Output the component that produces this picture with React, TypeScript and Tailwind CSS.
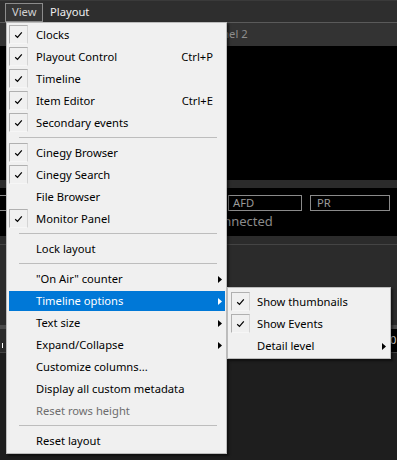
import React from "react";

type ItemProps = {
  label: string;
  checked?: boolean;
  shortcut?: string;
  arrow?: boolean;
  highlighted?: boolean;
  disabled?: boolean;
  sub?: boolean;
};

function Check() {
  return (
    <svg width="9" height="8" viewBox="0 0 9 8" className="block">
      <path d="M1.2 4.2 L3.5 6.4 L7.8 1.4" fill="none" stroke="#000" strokeWidth="1.2" />
    </svg>
  );
}

function Arrow({ white }: { white?: boolean }) {
  return (
    <svg width="4" height="7" viewBox="0 0 4 7" className="block">
      <polygon points="0,0 4,3.5 0,7" fill={white ? "#ffffff" : "#000000"} />
    </svg>
  );
}

function Item({ label, checked, shortcut, arrow, highlighted, disabled, sub }: ItemProps) {
  const color = highlighted ? "bg-[#0078d7] text-white" : disabled ? "text-[#6d6d6d]" : "text-black";
  return (
    <div className={`h-[22px] py-px ${sub ? "ml-[3px] mr-px" : "ml-[2px] mr-px"}`}>
      <div className={`h-full flex items-center ${color}`}>
        <div
          className={`self-start w-[19px] h-[19px] flex items-center justify-center ${
            checked ? "border border-t-[#b0b0b0] border-l-[#b0b0b0] border-r-[#d4d4d4] border-b-[#f6f6f6]" : ""
          }`}
        >
          {checked ? <Check /> : null}
        </div>
        <span className={`${sub ? "ml-[7px]" : "ml-[8px]"} whitespace-nowrap leading-none`}>{label}</span>
        <span className="ml-auto whitespace-nowrap leading-none">{shortcut ?? ""}</span>
        <div className="w-[12px] h-full flex items-center pl-[5px]">{arrow ? <Arrow white={highlighted} /> : null}</div>
      </div>
    </div>
  );
}

function Sep() {
  return (
    <div className="h-[8px] pt-[3px] pl-[12px] pr-[9px]">
      <div className="h-px bg-[#bdbdbd]" />
    </div>
  );
}

export default function App() {
  return (
    <div className="relative w-[397px] h-[460px] overflow-hidden bg-[#1e1e1e] font-['Noto_Sans',sans-serif] text-[11.2px]">
      {/* menu bar */}
      <div className="h-[22px] bg-[#2e2e2e] border-t border-[#3a3a3a] flex items-start">
        <div className="ml-[5px] mt-[2px] h-[19px] w-[38px] border border-[#8c8c8c] bg-[#363636] text-[#d0d0d0] pl-[6px] flex items-center">
          View
        </div>
        <div className="ml-[7px] mt-[2px] h-[19px] text-[#eeeeee] flex items-center">Playout</div>
      </div>
      <div className="h-px bg-[#5a5a5a]" />
      {/* panel header */}
      <div className="h-[23px] bg-[#333333] flex items-center pl-[195px] text-[#8e8e8e]">Channel 2</div>
      {/* video area */}
      <div className="h-[134px] bg-black" />
      <div className="h-[8px] bg-[#2b2b2b]" />
      <div className="h-[48px] bg-black pt-[7px]">
        <div className="flex gap-[8px] h-[16px] -ml-[10px]">
          <div className="w-[230px] border border-[#8a8a8a]" />
          <div className="w-[74px] border border-[#8a8a8a] text-[#9a9a9a] pl-[4px] flex items-center">AFD</div>
          <div className="w-[80px] border border-[#8a8a8a] text-[#9a9a9a] pl-[6px] flex items-center">PR</div>
        </div>
        <div className="h-[22px] flex items-center pl-[190px] text-[#8a8a8a] text-[13px]">Disconnected</div>
      </div>
      <div className="h-[8px] bg-[#2b2b2b]" />
      <div className="h-px bg-[#444444]" />
      <div className="h-[80px] bg-[#2b2b2b]" />
      <div className="h-[4px] bg-[#4a4a4a]" />
      <div className="h-[23px] bg-[#2b2b2b] flex items-center">
        <div className="ml-[2px] w-px h-[5px] mt-[10px] bg-white" />
        <div className="ml-auto w-[8px] h-full bg-black text-[#c8c8c8] flex items-center pl-[1px]">0</div>
      </div>
      <div className="h-px bg-[#444444]" />

      {/* main menu */}
      <div className="absolute left-[6px] top-[22px] w-[221px] bg-[#f0f0f0] border border-[#bcbcbc] py-px shadow-[2px_2px_2px_rgba(0,0,0,0.5)]">
        <Item label="Clocks" checked />
        <Item label="Playout Control" checked shortcut="Ctrl+P" />
        <Item label="Timeline" checked />
        <Item label="Item Editor" checked shortcut="Ctrl+E" />
        <Item label="Secondary events" checked />
        <Sep />
        <Item label="Cinegy Browser" checked />
        <Item label="Cinegy Search" checked />
        <Item label="File Browser" />
        <Item label="Monitor Panel" checked />
        <Sep />
        <Item label="Lock layout" />
        <Sep />
        <Item label={'"On Air" counter'} arrow />
        <Item label="Timeline options" arrow highlighted />
        <Item label="Text size" arrow />
        <Item label="Expand/Collapse" arrow />
        <Item label="Customize columns..." />
        <Item label="Display all custom metadata" />
        <Item label="Reset rows height" disabled />
        <Sep />
        <Item label="Reset layout" />
      </div>

      {/* submenu */}
      <div className="absolute left-[227px] top-[287px] w-[164px] bg-[#f0f0f0] border border-[#bcbcbc] pt-[3px] pb-px shadow-[2px_2px_2px_rgba(0,0,0,0.5)]">
        <Item label="Show thumbnails" checked sub />
        <Item label="Show Events" checked sub />
        <Item label="Detail level" arrow sub />
      </div>
    </div>
  );
}
